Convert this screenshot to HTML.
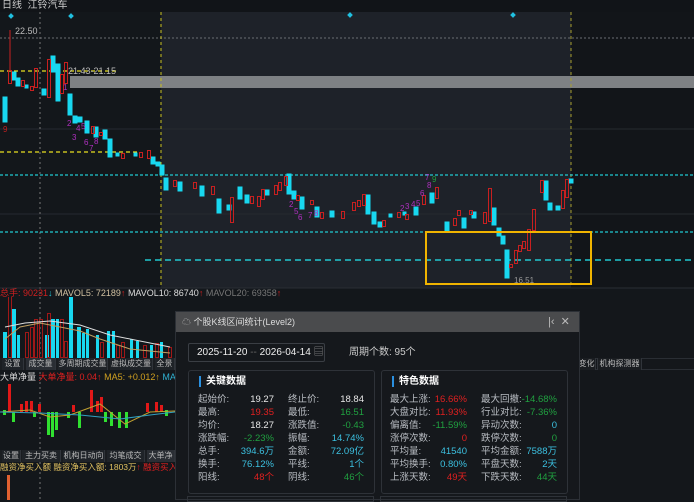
<!DOCTYPE html>
<html><head><meta charset="utf-8"><style>
*{margin:0;padding:0;box-sizing:border-box}
body{width:694px;height:500px;background:#13171b;position:relative;overflow:hidden;font-family:"Liberation Sans","Noto Sans CJK SC",sans-serif;font-size:10px;color:#c8c8c8}
.a{position:absolute;white-space:nowrap}
.tab{position:absolute;height:12px;line-height:12px;font-size:8px;color:#bbb;background:#1f2328;border-right:1px solid #30343a;text-align:center;overflow:hidden;white-space:nowrap}
.dlg{position:absolute;left:175px;top:311px;width:405px;height:189px;background:#15181c;border:1px solid #2c3036}
.card{position:absolute;border:1px solid #2e3238;border-radius:3px;background:#15181c}
.l{color:#b8bcc2}.w{color:#e8e8e8}.r{color:#e02020}.g{color:#20a040}.c{color:#3cc0e0}
.rows div{position:relative;height:13px}
</style></head><body>
<div class="a" style="left:0;top:0;width:694px;height:12px;background:#111418"></div>
<div class="a" style="left:2px;top:0;font-size:10px;color:#ccc;line-height:12px">日线&nbsp;&nbsp;江铃汽车</div>
<div class="a" style="left:161px;top:12px;width:410px;height:276px;background:#1e2229"></div>
<div class="a" style="left:571px;top:12px;width:123px;height:276px;background:#121519"></div>
<svg class="a" style="left:0;top:0" width="694" height="500">
<line x1="0" y1="38" x2="694" y2="38" stroke="#6a6d72" stroke-dasharray="2,2"/>
<line x1="0" y1="129" x2="694" y2="129" stroke="#262a30"/>
<line x1="0" y1="214" x2="694" y2="214" stroke="#262a30"/>
<rect x="70" y="76" width="624" height="12" fill="#7e8184"/>
<line x1="40" y1="12" x2="40" y2="500" stroke="#777" stroke-dasharray="2,3"/>
<line x1="161" y1="12" x2="161" y2="288" stroke="#c8c020" stroke-dasharray="3,3"/>
<line x1="571" y1="12" x2="571" y2="288" stroke="#a8a030" stroke-dasharray="3,3"/>
<line x1="0" y1="71" x2="118" y2="71" stroke="#e8e020" stroke-width="1.3" stroke-dasharray="4,3"/>
<line x1="0" y1="152" x2="140" y2="152" stroke="#e8e020" stroke-width="1.3" stroke-dasharray="4,3"/>
<line x1="0" y1="175" x2="694" y2="175" stroke="#20c8d0" stroke-width="1.3" stroke-dasharray="3,2"/>
<line x1="0" y1="232" x2="694" y2="232" stroke="#20c8d0" stroke-width="1.3" stroke-dasharray="3,2"/>
<line x1="145" y1="260" x2="694" y2="260" stroke="#20c8d0" stroke-width="1.6" stroke-dasharray="6,4"/>
<rect x="9" y="14" width="4" height="4" fill="#20c0e0" transform="rotate(45 11 16)"/>
<rect x="69" y="14" width="4" height="4" fill="#20c0e0" transform="rotate(45 71 16)"/>
<rect x="348" y="13" width="4" height="4" fill="#20c0e0" transform="rotate(45 350 15)"/>
<rect x="511" y="13" width="4" height="4" fill="#20c0e0" transform="rotate(45 513 15)"/>
<g stroke-width="1">
<g fill="#18d8f0" stroke="#18d8f0">
<rect x="3" y="97" width="4" height="25"/><rect x="12" y="72" width="4" height="8"/><rect x="16" y="78" width="4" height="8"/><rect x="25" y="85" width="3" height="3"/>
<rect x="42" y="89" width="4" height="6"/><rect x="51" y="56" width="4" height="16"/><rect x="56" y="64" width="4" height="37"/><rect x="68" y="94" width="4" height="21"/>
<rect x="73" y="116" width="4" height="7"/><rect x="78" y="117" width="4" height="5"/><rect x="85" y="121" width="4" height="12"/><rect x="94" y="127" width="4" height="10"/>
<rect x="103" y="130" width="4" height="9"/><rect x="108" y="139" width="4" height="18"/><rect x="116" y="153" width="3" height="3"/><rect x="134" y="153" width="3" height="3"/>
<rect x="151" y="157" width="4" height="7"/><rect x="156" y="162" width="4" height="4"/><rect x="160" y="165" width="4" height="10"/><rect x="164" y="178" width="4" height="12"/>
<rect x="178" y="182" width="4" height="9"/><rect x="200" y="186" width="4" height="10"/><rect x="217" y="199" width="4" height="14"/><rect x="227" y="205" width="4" height="5"/>
<rect x="238" y="187" width="4" height="12"/><rect x="245" y="195" width="4" height="8"/><rect x="265" y="190" width="4" height="5"/><rect x="287" y="174" width="4" height="20"/>
<rect x="292" y="191" width="4" height="8"/><rect x="300" y="197" width="4" height="12"/><rect x="315" y="207" width="4" height="10"/><rect x="330" y="211" width="4" height="6"/>
<rect x="366" y="195" width="4" height="19"/><rect x="372" y="212" width="4" height="12"/><rect x="378" y="222" width="4" height="5"/><rect x="389" y="214" width="3" height="3"/>
<rect x="403" y="212" width="3" height="3"/><rect x="414" y="207" width="4" height="8"/><rect x="430" y="193" width="4" height="10"/><rect x="445" y="222" width="4" height="9"/>
<rect x="462" y="218" width="4" height="10"/><rect x="472" y="212" width="4" height="6"/><rect x="492" y="208" width="4" height="17"/><rect x="497" y="228" width="4" height="8"/>
<rect x="501" y="236" width="4" height="8"/><rect x="505" y="250" width="4" height="28"/><rect x="544" y="181" width="4" height="19"/><rect x="548" y="203" width="4" height="7"/>
<rect x="556" y="206" width="4" height="4"/><rect x="569" y="179" width="4" height="4"/>
</g>
<g fill="none" stroke="#c82020">
<rect x="8.5" y="70.5" width="3" height="13"/><rect x="21.5" y="80.5" width="3" height="6"/><rect x="30.5" y="86.5" width="3" height="4"/><rect x="34.5" y="68.5" width="3" height="19"/>
<rect x="47.5" y="59.5" width="3" height="38"/><rect x="60.5" y="74.5" width="3" height="19"/><rect x="64.5" y="62.5" width="3" height="21"/><rect x="91.5" y="126.5" width="3" height="7"/>
<rect x="99.5" y="132.5" width="3" height="3"/><rect x="121.5" y="153.5" width="3" height="5"/><rect x="139.5" y="152.5" width="3" height="5"/><rect x="147.5" y="150.5" width="3" height="8"/>
<rect x="173.5" y="180.5" width="3" height="6"/><rect x="193.5" y="182.5" width="3" height="6"/><rect x="211.5" y="186.5" width="3" height="8"/><rect x="230.5" y="197.5" width="3" height="25"/>
<rect x="250.5" y="196.5" width="3" height="7"/><rect x="257.5" y="196.5" width="3" height="10"/><rect x="261.5" y="189.5" width="3" height="10"/><rect x="274.5" y="185.5" width="3" height="9"/>
<rect x="278.5" y="182.5" width="3" height="8"/><rect x="284.5" y="176.5" width="3" height="9"/><rect x="296.5" y="195.5" width="3" height="5"/><rect x="310.5" y="200.5" width="3" height="4"/>
<rect x="320.5" y="212.5" width="3" height="6"/><rect x="341.5" y="211.5" width="3" height="7"/><rect x="352.5" y="202.5" width="3" height="8"/><rect x="357.5" y="200.5" width="3" height="6"/>
<rect x="362.5" y="194.5" width="3" height="11"/><rect x="382.5" y="220.5" width="3" height="6"/><rect x="397.5" y="212.5" width="3" height="5"/><rect x="405.5" y="214.5" width="3" height="5"/>
<rect x="422.5" y="195.5" width="3" height="9"/><rect x="435.5" y="187.5" width="3" height="11"/><rect x="453.5" y="218.5" width="3" height="7"/><rect x="457.5" y="210.5" width="3" height="5"/>
<rect x="469.5" y="210.5" width="3" height="4"/><rect x="483.5" y="212.5" width="3" height="11"/><rect x="488.5" y="188.5" width="3" height="33"/><rect x="509.5" y="264.5" width="3" height="3"/>
<rect x="514.5" y="250.5" width="3" height="13"/><rect x="518.5" y="245.5" width="3" height="6"/><rect x="522.5" y="241.5" width="3" height="7"/><rect x="527.5" y="229.5" width="3" height="21"/>
<rect x="532.5" y="209.5" width="3" height="21"/><rect x="540.5" y="180.5" width="3" height="12"/><rect x="561.5" y="190.5" width="3" height="18"/><rect x="565.5" y="179.5" width="3" height="18"/>
<line x1="10" y1="30" x2="10" y2="70"/>
</g></g>
<rect x="426" y="232" width="165" height="52" fill="none" stroke="#f0b400" stroke-width="2"/>
<g font-size="8" fill="#b030c0" font-family="Liberation Sans">
<text x="67" y="126">2</text><text x="76" y="131">4</text><text x="81" y="129">5</text><text x="72" y="140">3</text><text x="84" y="145">6</text><text x="94" y="144">8</text><text x="89" y="151">7</text><text x="63" y="90">1</text>
<text x="289" y="207">2</text><text x="294" y="214">5</text><text x="298" y="220">6</text><text x="308" y="218">7</text><text x="314" y="216">8</text>
<text x="400" y="211">2</text><text x="405" y="209">3</text><text x="411" y="207">4</text><text x="416" y="206">5</text><text x="420" y="196">6</text><text x="425" y="180">7</text><text x="427" y="188">8</text>
</g>
<text x="3" y="132" font-size="8" fill="#c02020">9</text><text x="432" y="182" font-size="8" fill="#20a040">9</text>
<text x="15" y="34" font-size="9" fill="#bbb">22.50</text><text x="68" y="74" font-size="9" fill="#bbb">21.43-21.15</text>
<text x="514" y="283" font-size="8" fill="#999">16.51</text>
<line x1="0" y1="288" x2="694" y2="288" stroke="#2a2e34"/>
</svg>
<div class="a" style="left:0;top:288px;width:694px;height:10px;font-size:9px;line-height:10px"><span style="color:#d02020">总手: 90231</span><span style="color:#20c0d0">↓</span> <span style="color:#d0c0a0">MAVOL5: 72189</span><span style="color:#d02020">↑</span> <span style="color:#ddd">MAVOL10: 86740</span><span style="color:#d02020">↑</span> <span style="color:#777">MAVOL20: 69358</span><span style="color:#d02020">↑</span></div>
<svg class="a" style="left:0;top:297px" width="175" height="203">
<g fill="#18d8f0"><rect x="3" y="35" width="4" height="26"/><rect x="12" y="12" width="4" height="49"/><rect x="17" y="38" width="3" height="23"/><rect x="45" y="38" width="4" height="23"/><rect x="51" y="22" width="4" height="39"/><rect x="56" y="22" width="3" height="39"/><rect x="69" y="0" width="4" height="61"/><rect x="77" y="30" width="4" height="31"/><rect x="82" y="36" width="3" height="25"/><rect x="86" y="32" width="3" height="29"/><rect x="96" y="38" width="3" height="23"/><rect x="107" y="34" width="3" height="27"/><rect x="112" y="34" width="3" height="27"/><rect x="130" y="42" width="3" height="19"/><rect x="136" y="44" width="3" height="17"/><rect x="150" y="48" width="3" height="13"/><rect x="160" y="45" width="3" height="16"/></g>
<g fill="none" stroke="#a01818"><rect x="8.5" y="-10.5" width="3" height="71"/><rect x="25.5" y="35.5" width="3" height="25"/><rect x="30.5" y="30.5" width="3" height="30"/><rect x="34.5" y="22.5" width="3" height="38"/><rect x="39.5" y="22.5" width="3" height="38"/><rect x="47.5" y="16.5" width="3" height="44"/><rect x="60.5" y="22.5" width="3" height="38"/><rect x="64.5" y="44.5" width="3" height="16"/><rect x="100.5" y="45.5" width="3" height="15"/><rect x="116.5" y="48.5" width="3" height="12"/><rect x="121.5" y="45.5" width="3" height="15"/><rect x="143.5" y="48.5" width="3" height="12"/><rect x="155.5" y="46.5" width="3" height="14"/><rect x="168.5" y="50.5" width="3" height="10"/></g>
<polyline points="5,42 20,30 40,26 60,30 80,34 100,42 130,52 170,56" fill="none" stroke="#c0a060"/>
<polyline points="5,30 25,26 50,24 80,28 110,38 140,44 170,50" fill="none" stroke="#ddd"/>
<g fill="#e01818"><rect x="8" y="87" width="3" height="28"/><rect x="20" y="107" width="3" height="8"/><rect x="25" y="104" width="3" height="11"/><rect x="30" y="104" width="3" height="11"/><rect x="38" y="107" width="3" height="8"/><rect x="72" y="108" width="3" height="7"/><rect x="90" y="93" width="3" height="22"/><rect x="96" y="104" width="3" height="11"/><rect x="100" y="100" width="3" height="15"/><rect x="146" y="106" width="3" height="9"/><rect x="155" y="105" width="3" height="10"/><rect x="160" y="108" width="3" height="7"/></g>
<g fill="#30e030"><rect x="3" y="113" width="3" height="5"/><rect x="12" y="115" width="3" height="10"/><rect x="33" y="115" width="3" height="5"/><rect x="47" y="115" width="3" height="23"/><rect x="51" y="115" width="3" height="25"/><rect x="55" y="115" width="3" height="18"/><rect x="67" y="115" width="3" height="6"/><rect x="78" y="115" width="3" height="16"/><rect x="104" y="115" width="3" height="10"/><rect x="110" y="115" width="3" height="14"/><rect x="118" y="115" width="3" height="16"/><rect x="125" y="115" width="3" height="16"/><rect x="165" y="113" width="3" height="6"/></g>
<polyline points="0,115 30,113 50,120 70,118 100,107 125,127 150,115 175,114" fill="none" stroke="#c0a030"/>
<polyline points="0,115 40,116 80,118 120,122 150,118 175,115" fill="none" stroke="#30a0c0"/>
<rect x="7" y="178" width="3" height="25" fill="#e06030"/>
</svg>
<div class="a" style="left:0;top:358px;width:175px;height:12px;background:#1a1d21"></div>
<div class="tab" style="left:2px;top:358px;width:22px">设置</div><div class="tab" style="left:26px;top:358px;width:30px;background:#2a2e34">成交量</div><div class="tab" style="left:58px;top:358px;width:50px">多周期成交量</div><div class="tab" style="left:110px;top:358px;width:43px">虚拟成交量</div><div class="tab" style="left:155px;top:358px;width:20px">全景</div>
<div class="a" style="left:0;top:372px;font-size:9px;line-height:10px"><span style="color:#ddd">大单净量</span> <span style="color:#e02020">大单净量: 0.04↑</span> <span style="color:#d0a020">MA5: +0.012↑</span> <span style="color:#30b0d0">MA10: +0.0</span></div>
<div class="a" style="left:0;top:450px;width:175px;height:12px;background:#1a1d21"></div>
<div class="tab" style="left:2px;top:450px;width:19px">设置</div><div class="tab" style="left:22px;top:450px;width:39px">主力买卖</div><div class="tab" style="left:63px;top:450px;width:42px">机构日动向</div><div class="tab" style="left:107px;top:450px;width:38px">均笔成交</div><div class="tab" style="left:147px;top:450px;width:28px;background:#2a2e34">大单净</div>
<div class="a" style="left:0;top:462px;font-size:8.5px;line-height:10px"><span style="color:#e0c060">融资净买入额</span> <span style="color:#e0c060">融资净买入额: 1803万</span><span style="color:#e02020">↑ 融资买入额: 1</span></div>
<div class="a" style="left:540px;top:300px;width:154px;height:200px;background:#14171b"></div>
<div class="a" style="left:540px;top:358px;width:154px;height:12px;border-top:1px solid #2a2e34;border-bottom:1px solid #2a2e34"></div>
<div class="tab" style="left:578px;top:358px;width:18px;background:#1a1d21">变化</div><div class="tab" style="left:597px;top:358px;width:45px;background:#1a1d21;border-left:1px solid #30343a">机构探测器</div>
<div class="dlg">
<div class="a" style="left:0;top:0;width:403px;height:20px;background:#4a4b4d"></div>
<div class="a" style="left:6px;top:0;line-height:20px;font-size:9px;color:#ddd"><span style="color:#bbb">☁</span> 个股K线区间统计(Level2)</div>
<div class="a" style="left:372px;top:0;line-height:20px;font-size:11px;color:#bbb">|‹&nbsp;&nbsp;✕</div>
<div class="a" style="left:12px;top:31px;width:137px;height:19px;border:1px solid #3a3e44;border-radius:2px;line-height:17px;font-size:10px;color:#eee;padding-left:8px">2025-11-20 <span style="color:#666">--</span> 2026-04-14 <span style="color:#888">▤</span></div>
<div class="a" style="left:173px;top:31px;line-height:19px;font-size:10px;color:#ccc">周期个数: 95个</div>
<div class="card" style="left:12px;top:58px;width:187px;height:124px"></div>
<div class="card" style="left:205px;top:58px;width:187px;height:124px"></div>
<div class="a" style="left:23px;top:64px;font-size:10px;color:#fff;font-weight:bold;border-left:2px solid #2a90e0;padding-left:5px;line-height:11px">关键数据</div>
<div class="a" style="left:216px;top:64px;font-size:10px;color:#fff;font-weight:bold;border-left:2px solid #2a90e0;padding-left:5px;line-height:11px">特色数据</div>
</div>
<div class="a rows" style="left:198px;top:393px;width:176px;font-size:9.5px;line-height:13px">
<div><span class="l">起始价:</span><span class="w a" style="right:100px">19.27</span><span class="l a" style="left:90px">终止价:</span><span class="w a" style="right:10px">18.84</span></div>
<div><span class="l">最高:</span><span class="r a" style="right:100px">19.35</span><span class="l a" style="left:90px">最低:</span><span class="g a" style="right:10px">16.51</span></div>
<div><span class="l">均价:</span><span class="w a" style="right:100px">18.27</span><span class="l a" style="left:90px">涨跌值:</span><span class="g a" style="right:10px">-0.43</span></div>
<div><span class="l">涨跌幅:</span><span class="g a" style="right:100px">-2.23%</span><span class="l a" style="left:90px">振幅:</span><span class="c a" style="right:10px">14.74%</span></div>
<div><span class="l">总手:</span><span class="c a" style="right:100px">394.6万</span><span class="l a" style="left:90px">金额:</span><span class="c a" style="right:10px">72.09亿</span></div>
<div><span class="l">换手:</span><span class="c a" style="right:100px">76.12%</span><span class="l a" style="left:90px">平线:</span><span class="c a" style="right:10px">1个</span></div>
<div><span class="l">阳线:</span><span class="r a" style="right:100px">48个</span><span class="l a" style="left:90px">阴线:</span><span class="g a" style="right:10px">46个</span></div>
</div>
<div class="a rows" style="left:390px;top:393px;width:177px;font-size:9.5px;line-height:13px">
<div><span class="l">最大上涨:</span><span class="r a" style="right:100px">16.66%</span><span class="l a" style="left:91px">最大回撤:</span><span class="g a" style="right:10px">-14.68%</span></div>
<div><span class="l">大盘对比:</span><span class="r a" style="right:100px">11.93%</span><span class="l a" style="left:91px">行业对比:</span><span class="g a" style="right:10px">-7.36%</span></div>
<div><span class="l">偏离值:</span><span class="g a" style="right:100px">-11.59%</span><span class="l a" style="left:91px">异动次数:</span><span class="c a" style="right:10px">0</span></div>
<div><span class="l">涨停次数:</span><span class="r a" style="right:100px">0</span><span class="l a" style="left:91px">跌停次数:</span><span class="g a" style="right:10px">0</span></div>
<div><span class="l">平均量:</span><span class="c a" style="right:100px">41540</span><span class="l a" style="left:91px">平均金额:</span><span class="c a" style="right:10px">7588万</span></div>
<div><span class="l">平均换手:</span><span class="c a" style="right:100px">0.80%</span><span class="l a" style="left:91px">平盘天数:</span><span class="c a" style="right:10px">2天</span></div>
<div><span class="l">上涨天数:</span><span class="r a" style="right:100px">49天</span><span class="l a" style="left:91px">下跌天数:</span><span class="g a" style="right:10px">44天</span></div>
</div>
<div class="a" style="left:187px;top:496px;width:187px;height:6px;border:1px solid #2e3238"></div>
<div class="a" style="left:380px;top:496px;width:187px;height:6px;border:1px solid #2e3238"></div>
</body></html>
